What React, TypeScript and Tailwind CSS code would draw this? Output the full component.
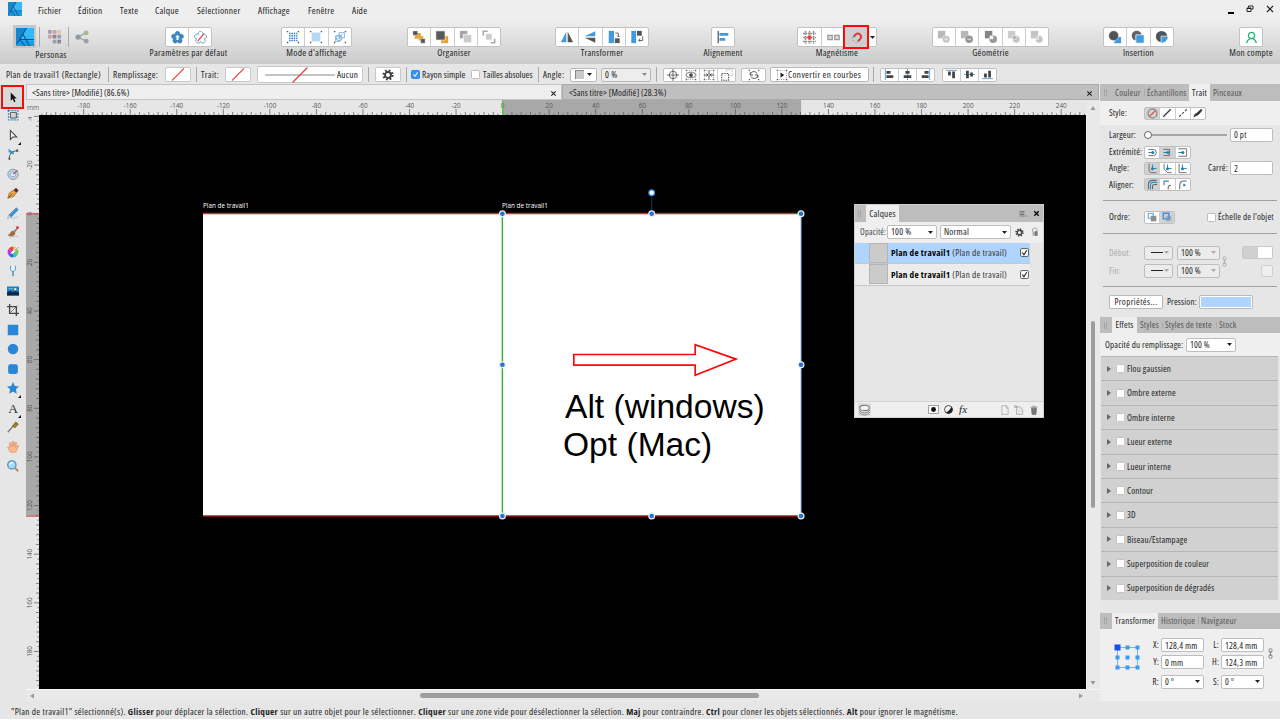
import type { ReactNode } from "react";

// 16x16 drawing box shared by all small icons
function Ic({ s = 14, children, className = "" }: { s?: number; children: ReactNode; className?: string }) {
  return (
    <svg width={s} height={s} viewBox="0 0 16 16" fill="none" className={`shrink-0 ${className}`}>
      {children}
    </svg>
  );
}

function Logo({ s }: { s: number }) {
  return (
    <Ic s={s}>
      <rect width="16" height="16" fill="#1d9be0" />
      <path d="M9.5 0H16v11H3.5z" fill="#36b8f5" />
      <path d="M0 0h9L0 14z" fill="#1787cc" />
      <path d="M9.3 0L.6 14.5M3.4 10.2H16M3.4 10.2L8 16M6.2 5.5L12 16" stroke="#0c4f86" strokeWidth=".9" />
    </Ic>
  );
}

const Sep = ({ className = "" }: { className?: string }) => <div className={`w-px shrink-0 bg-[#a9a9a9] ${className}`} />;

const Caret = ({ className = "text-[#222]" }: { className?: string }) => (
  <svg width="5" height="3" viewBox="0 0 5 3" className={`shrink-0 ${className}`}>
    <path d="M0 0h5L2.5 3z" fill="currentColor" />
  </svg>
);

function Check({ on = false, className = "" }: { on?: boolean; className?: string }) {
  return (
    <div
      className={`flex size-[9px] shrink-0 items-center justify-center rounded-[1.5px] border ${
        on ? "border-[#2f86ea] bg-[#3a92f2]" : "border-[#bdbdbd] bg-white"
      } ${className}`}
    >
      {on && (
        <Ic s={7}>
          <path d="M3 8l4 4 6-9" stroke="#fff" strokeWidth="2.4" />
        </Ic>
      )}
    </div>
  );
}

// Titled group of buttons in the main toolbar
function Group({ label, className, icons, active = -1, extra }: { label: string; className: string; icons: ReactNode[]; active?: number; extra?: ReactNode }) {
  return (
    <div className={`flex shrink-0 flex-col items-center ${className}`}>
      <div className="flex h-5 w-full rounded-[2px] border border-[#c2c2c2] bg-white">
        {icons.map((icon, i) => (
          <div
            key={i}
            className={`flex flex-1 items-center justify-center ${i > 0 ? "border-l border-[#cdcdcd]" : ""} ${
              i === active ? "-my-[2px] bg-[#cfcfcf] outline-2 -outline-offset-1 outline-[#fa0a0a]" : ""
            }`}
          >
            {icon}
          </div>
        ))}
        {extra}
      </div>
      <div className="-mt-px text-[9.400px] leading-[14px] tracking-[0.26px]">{label}</div>
    </div>
  );
}

function ButtonRow({ icons, className, on = [] }: { icons: ReactNode[]; className: string; on?: number[] }) {
  return (
    <div className={`flex shrink-0 rounded-[2px] border border-[#c0c0c0] bg-white ${className}`}>
      {icons.map((icon, i) => (
        <div
          key={i}
          className={`flex flex-1 items-center justify-center ${i > 0 ? "border-l border-[#cdcdcd]" : ""} ${on.includes(i) ? "bg-[#d2d2d2]" : ""}`}
        >
          {icon}
        </div>
      ))}
    </div>
  );
}

const corners = <path d="M1 1h1.6v1.6H1zM13.4 1H15v1.6h-1.6zM1 13.4h1.6V15H1zM13.4 13.4H15V15h-1.6z" fill="#555" />;
const frame = <rect x="2" y="2" width="12" height="12" stroke="#777" strokeWidth=".8" strokeDasharray="1.5 1.5" />;

// five petals, drawn as arcs between the inner corners of the flower
const flower = "M5.3 4.4a2.9 2.9 0 1 1 5.4 0a2.9 2.9 0 1 1 1.7 5.2a2.9 2.9 0 1 1-4.4 3.2a2.9 2.9 0 1 1-4.4-3.2a2.9 2.9 0 1 1 1.7-5.2z";

const defaultIcons = [
  <Ic key="a" s={13}><path d={flower} fill="#3e87c0" stroke="#2b6ea8" strokeWidth=".6" /><path d="M8 4.500l2.800 3.300H9.200v3.400H6.800V7.800H5.200z" fill="#fff" /></Ic>,
  <Ic key="b" s={13}><path d={flower} stroke="#6ba3cf" strokeWidth="1.200" /><path d="M4.500 12.500l7.500-9" stroke="#ee3b33" strokeWidth="1.500" /></Ic>,
];

const viewIcons = [
  <Ic key="a">{corners}<path d="M3.500 4h9.500M3.500 6.700h9.500M3.500 9.400h9.500M3.500 12.100h9.500" stroke="#2f80c8" strokeWidth="1.700" strokeDasharray="1.700 1" /></Ic>,
  <Ic key="b">{corners}<rect x="3" y="3" width="10" height="10" fill="#b5d8f3" /></Ic>,
  <Ic key="c">{corners}<path d="M7 3h6v6H7zM3 6.500h5V13H3zM4 11.500l7-7" stroke="#78aed8" /><circle cx="7" cy="9" r="3.300" stroke="#78aed8" /></Ic>,
];

const orderIcons = [
  <Ic key="a"><path d="M5 3.500h5v5H5zM7.500 7H13v5H7.500zM3 6h4v4H3z" fill="#e7a334" /><path d="M1 1h5.500v5H1zM10 10h5v5h-5z" fill="#555" stroke="#fff" strokeWidth=".4" /></Ic>,
  <Ic key="b"><path d="M7 7h8v8H7z" fill="#e7a334" /><path d="M1 1h10.500v10.500H1z" fill="#5a5a5a" stroke="#fff" strokeWidth=".7" /></Ic>,
  <Ic key="c"><path d="M1 1h8.500v8.500H1z" fill="#a6a6a6" /><path d="M5 5h9.500v9.500H5z" fill="#ccc" stroke="#fff" strokeWidth=".8" /></Ic>,
  <Ic key="d"><path d="M1.500 6.500v-5h5M14.500 10v4.500H10" stroke="#a8a8a8" strokeWidth="1.800" /><path d="M4 4h7.500v7.500H4z" fill="#ccc" stroke="#fff" strokeWidth=".8" /></Ic>,
];

const transformIcons = [
  <Ic key="a"><path d="M7.200 2v12H1z" fill="#3f9ae0" /><path d="M8.800 2v12H15z" fill="#555" /></Ic>,
  <Ic key="b"><path d="M14 1.500v5.700H2z" fill="#3f9ae0" /><path d="M14 14.500V8.800H2z" fill="#555" /></Ic>,
  <Ic key="c"><path d="M2 1h6v14H2z" fill="#3f9ae0" /><path d="M9 9.500h5.500V15H9z" fill="#555" /><path d="M9.500 3.500h3.500v4.500M11.500 6.500L13 8l1.500-1.500" stroke="#666" strokeWidth="1.100" /></Ic>,
  <Ic key="d"><path d="M1.500 1h5.500v14H1.500z" fill="#3f9ae0" /><path d="M8 1h5.500v5.500H8z" fill="#555" /><path d="M14.500 7v5H10M11.500 10L10 12l1.500 1.500" stroke="#666" strokeWidth="1.100" /></Ic>,
];

const alignIcon = [
  <Ic key="a"><path d="M2.500 1v14" stroke="#445" strokeWidth="1.300" /><path d="M4 3.500h10v3.200H4zM4 9h6.500v3.200H4z" fill="#3f9ae0" /></Ic>,
];

const snapIcons = [
  <Ic key="a" s={13}><path d="M3 0v16M8 0v16M13 0v16M0 3h16M0 8h16M0 13h16" stroke="#8a8a8a" strokeWidth="1.800" strokeDasharray="2 1" /><circle cx="8" cy="8" r="2.700" fill="#f04038" /></Ic>,
  <Ic key="b" s={13}><path d="M1 5.500h5.500v5H1zM9.500 5.500H15v5H9.500z" fill="#d8d8d8" stroke="#999" strokeWidth="1.500" /></Ic>,
  <Ic key="c" s={13}><path d="M5 6.500L7 4.200a3.900 3.900 0 015.600 5.400L10.500 12" stroke="#e8353b" strokeWidth="2.500" /><path d="M5.500 5.800L4 7.500M11 11.500L9.500 13" stroke="#777" strokeWidth="2.500" /><path d="M1.500 8.500l1.500.7M3.500 11.500l1.500.8M7 13.500l1 1.500" stroke="#888" /></Ic>,
];

const geo = (key: string, extra: ReactNode, dark = "#b9b9b9") => (
  <Ic key={key}><path d="M1 1h8.500v8.500H1z" fill={dark} /><circle cx="10.500" cy="10.500" r="4.300" fill="#c3c3c3" stroke="#fff" strokeWidth=".5" />{extra}</Ic>
);
const geometryIcons = [
  geo("add", <path d="M8.500 10.500h4M10.500 8.500v4" stroke="#eee" />),
  geo("sub", <><circle cx="10.500" cy="10.500" r="4.300" fill="#979797" /><path d="M8.300 10.500h4.400" stroke="#eee" /></>),
  geo("int", <><circle cx="10.500" cy="10.500" r="4.300" fill="#999" /><path d="M6.500 6.500h4v4h-4z" fill="#f5f5f5" /></>, "#858585"),
  geo("xor", <path d="M6.500 6.500h4v4h-4z" fill="#aaa" stroke="#fff" strokeWidth=".6" />, "#ccc"),
  geo("div", <path d="M9.500 6.500v4h-4" stroke="#fff" />, "#c4c4c4"),
];

const insertIcons = [
  <Ic key="a"><path d="M8.500 8H15v7H7z" fill="#3f9ae0" /><circle cx="6.500" cy="6.500" r="5.700" fill="#505459" stroke="#fff" strokeWidth=".6" /></Ic>,
  <Ic key="b"><circle cx="6.500" cy="6.500" r="5.700" fill="#606468" /><path d="M5.500 5.500H15V15H5.500z" fill="#3f9ae0" stroke="#fff" strokeWidth=".8" /></Ic>,
  <Ic key="c"><circle cx="7.500" cy="7.500" r="6.500" fill="#505459" /><path d="M7 7h8c0 4-3 8-8 8z" fill="#3f9ae0" stroke="#fff" strokeWidth=".8" /></Ic>,
];

function MenuBar() {
  // each item: label and its slot width
  const items: [string, string][] = [
    ["Fichier", "w-[40px]"],
    ["Édition", "w-[42px]"],
    ["Texte", "w-[35px]"],
    ["Calque", "w-[42px]"],
    ["Sélectionner", "w-[61px]"],
    ["Affichage", "w-[50px]"],
    ["Fenêtre", "w-[44px]"],
    ["Aide", "w-[40px]"],
  ];
  return (
    <div className="flex h-[22px] shrink-0 items-center bg-[#eeeeee] text-[9.400px] tracking-[0.26px]">
      <div className="ml-2 w-[30px] -translate-y-[2px]"><Logo s={14} /></div>
      {items.map(([t, w]) => (
        <div key={t} className={`${w} pt-px`}>{t}</div>
      ))}
      <div className="mr-[6px] ml-auto flex items-center gap-[12px] pb-1">
        <div className="mt-2 h-[2px] w-[6px] bg-black" />
        <Ic s={8}><path d="M5 5V2h9v6h-3M2 6h8v7H2zM2 7h8" stroke="#222" strokeWidth="2" /></Ic>
        <Ic s={8}><path d="M2 2l12 12M14 2L2 14" stroke="#222" strokeWidth="2.400" /></Ic>
      </div>
    </div>
  );
}

function Toolbar() {
  return (
    <div className="flex h-[42px] shrink-0 items-start bg-linear-to-b from-[#ededed] to-[#cbcbcb] pt-[5px]">
      <div className="-mt-[2px] ml-[13px] flex w-[76px] flex-col items-center">
        <div className="flex w-full items-center">
          <div className="flex size-[23px] items-center justify-center bg-[#c6c6c6]"><Logo s={18} /></div>
          <Sep className="ml-[3px] h-[20px]" />
          <Ic s={15} className="ml-[7px]">
            <path d="M1 1h4v4H1zM6 11.500h4v4H6zM11 6h4v4h-4z" fill="#a99bb0" /><path d="M6 1h4v4H6zM1 6h4v4H1z" fill="#c9a3a0" /><path d="M6 6h4v4H6zM11 11.500h4v4h-4z" fill="#8c8797" /><path d="M11 1h4v4h-4z" fill="#dac6bd" />
          </Ic>
          <Sep className="ml-[6px] h-[20px]" />
          <Ic s={14} className="ml-[6px]">
            <path d="M13 3L3.500 8 13 13" stroke="#9aa5aa" strokeWidth="1.500" /><circle cx="3.500" cy="8" r="3" fill="#8e9ba3" /><circle cx="12.800" cy="3.200" r="2.700" fill="#a4b892" /><circle cx="12.800" cy="12.800" r="2.700" fill="#9a9fa8" />
          </Ic>
        </div>
        <div className="text-[9.400px] leading-[14px] tracking-[0.26px]">Personas</div>
      </div>
      <Group label="Paramètres par défaut" className="ml-[76px] w-[47px]" icons={defaultIcons} />
      <Group label="Mode d'affichage" className="ml-[69px] w-[71px]" icons={viewIcons} />
      <Group label="Organiser" className="ml-[55px] w-[94px]" icons={orderIcons} />
      <Group label="Transformer" className="ml-[54px] w-[94px]" icons={transformIcons} />
      <Group label="Alignement" className="ml-[62px] w-[24px]" icons={alignIcon} />
      <Group
        label="Magnétisme"
        className="ml-[62px] w-[80px]"
        icons={snapIcons}
        active={2}
        extra={<div className="flex w-[8px] items-center justify-center"><Caret /></div>}
      />
      <Group label="Géométrie" className="ml-[55px] w-[117px]" icons={geometryIcons} />
      <Group label="Insertion" className="ml-[54px] w-[71px]" icons={insertIcons} />
      <Group
        label="Mon compte"
        className="ml-[65px] w-[24px]"
        icons={[<Ic key="a" s={13}><circle cx="8" cy="5.500" r="3.800" stroke="#22b573" strokeWidth="1.500" /><path d="M2 15c.5-3.500 3-5 4.500-5.700M14 15c-.5-3.500-3-5-4.500-5.700" stroke="#22b573" strokeWidth="1.500" /></Ic>]}
      />
    </div>
  );
}

const NoFill = () => (
  <div className="flex h-[15px] w-[26px] shrink-0 items-center justify-center rounded-[2px] border border-[#c8c8c8] bg-white">
    <svg width="14" height="13" viewBox="0 0 14 13"><path d="M1 12.500L13 .5" stroke="#ee4a44" strokeWidth="1.100" /></svg>
  </div>
);

const ctxIcons = [
  <Ic key="a" s={12}><circle cx="8" cy="8" r="5" stroke="#444" /><path d="M8 0v16M0 8h16" stroke="#444" /></Ic>,
  <Ic key="b" s={12}>{corners}{frame}<path d="M1 8c3-5 11-5 14 0-3 5-11 5-14 0z" fill="#fff" stroke="#444" /><circle cx="8" cy="8" r="2.500" fill="#444" /></Ic>,
  <Ic key="c" s={12}>{corners}{frame}<path d="M8 2v12M1 8h5M10 8h5M4.500 6l2 2-2 2M11.500 6l-2 2 2 2" stroke="#444" strokeWidth="1.200" /></Ic>,
  <Ic key="d" s={12}><path d="M1 6h9v9H1z" stroke="#555" strokeWidth="1.500" strokeDasharray="2 1.300" /><path d="M7 4V1h8v8h-3" stroke="#aaa" strokeDasharray="2 1" /></Ic>,
];

const horAlign = [
  <Ic key="a" s={11}><path d="M2 0v16" stroke="#6aa9dc" strokeWidth="1.500" /><path d="M3.500 3h6v4h-6zM3.500 9h10v4h-10z" fill="#444" /></Ic>,
  <Ic key="b" s={11}><path d="M8 0v16" stroke="#6aa9dc" strokeWidth="1.500" /><path d="M5 3h6v4H5zM2.500 9h11v4h-11z" fill="#444" /></Ic>,
  <Ic key="c" s={11}><path d="M14 0v16" stroke="#6aa9dc" strokeWidth="1.500" /><path d="M6.500 3h6v4h-6zM2.500 9h10v4h-10z" fill="#444" /></Ic>,
];
const verAlign = [
  <Ic key="a" s={11}><path d="M0 2h16" stroke="#6aa9dc" strokeWidth="1.500" /><path d="M3 3.500h4v6H3zM9 3.500h4v10H9z" fill="#444" /></Ic>,
  <Ic key="b" s={11}><path d="M0 8h16" stroke="#6aa9dc" strokeWidth="1.500" /><path d="M3 2.500h4v11H3zM9 5h4v6H9z" fill="#444" /></Ic>,
  <Ic key="c" s={11}><path d="M0 14h16" stroke="#6aa9dc" strokeWidth="1.500" /><path d="M3 6.500h4v6H3zM9 2.500h4v10H9z" fill="#444" /></Ic>,
];

function ContextBar() {
  return (
    <div className="flex h-5 shrink-0 items-center bg-[#e6e6e6] pt-px text-[9.200px] tracking-[0.3px]">
      <div className="ml-[6px] w-[102px] shrink-0">Plan de travail1 (Rectangle)</div>
      <Sep className="h-[15px]" />
      <div className="ml-[4px] w-[52px] shrink-0">Remplissage:</div>
      <NoFill />
      <Sep className="ml-[5px] h-[15px]" />
      <div className="ml-[4px] w-[24px] shrink-0">Trait:</div>
      <NoFill />
      <div className="ml-[6px] flex h-[17px] w-[106px] shrink-0 items-center rounded-[2px] border border-[#c8c8c8] bg-white pl-[7px]">
        <svg width="70" height="16" viewBox="0 0 70 16"><path d="M0 8h70" stroke="#555" strokeWidth=".7" /><path d="M27.500 15.500L42.500.5" stroke="#ee3a34" strokeWidth="1.300" /></svg>
        <span className="ml-[2px]">Aucun</span>
      </div>
      <Sep className="ml-[5px] h-[15px]" />
      <div className="ml-[6px] flex h-[15px] w-[26px] shrink-0 items-center justify-center rounded-[2px] border border-[#c8c8c8] bg-white"><Gear s={12} /></div>
      <Sep className="ml-[5px] h-[15px]" />
      <Check on className="ml-[4px]" />
      <div className="ml-[2px] w-[49px] shrink-0 tracking-[0.1px]">Rayon simple</div>
      <Check />
      <div className="ml-[3px] w-[55px] shrink-0 tracking-normal">Tailles absolues</div>
      <Sep className="h-[15px]" />
      <div className="ml-[4px] w-[27px] shrink-0">Angle:</div>
      <div className="flex h-[14px] w-[27px] shrink-0 items-center justify-between rounded-[2px] border border-[#b8b8b8] bg-white px-1">
        <div className="size-[9px] border-t border-l border-[#888] bg-[#c8c8c8]" />
        <Caret />
      </div>
      <div className="ml-[4px] flex h-[14px] w-[50px] shrink-0 items-center justify-between rounded-[2px] border border-[#b8b8b8] bg-[#ededed] px-[3px]">
        0 %<Caret className="text-[#888]" />
      </div>
      <Sep className="ml-[5px] h-[15px]" />
      <ButtonRow className="ml-[6px] h-[14px] w-[73px]" icons={ctxIcons} />
      <ButtonRow className="ml-[5px] h-[14px] w-[25px]" icons={[<Ic key="a" s={12}>{corners}<path d="M3 7c1-4 7-5 9-1M13 9c-1 4-7 5-9 1M3 4.500V8h3.500M13 11.500V8H9.500" stroke="#444" strokeWidth="1.300" /></Ic>]} />
      <div className="ml-[4px] flex h-[15px] w-[99px] shrink-0 items-center rounded-[2px] border border-[#b8b8b8] bg-white pl-[5px]">
        <Ic s={12}>{corners}{frame}<path d="M6 4.500l5 3.500-5 3.500z" fill="#222" /></Ic>
        <span className="tracking-[0.38px]">Convertir en courbes</span>
      </div>
      <Sep className="ml-[4px] h-[15px]" />
      <ButtonRow className="ml-[6px] h-[14px] w-[55px]" icons={horAlign} />
      <ButtonRow className="ml-[7px] h-[14px] w-[55px]" icons={verAlign} />
    </div>
  );
}

function Gear({ s }: { s: number }) {
  return (
    <Ic s={s}>
      <circle cx="8" cy="8" r="6" stroke="#444" strokeWidth="3" strokeDasharray="2.400 2.312" />
      <circle cx="8" cy="8" r="4" stroke="#444" strokeWidth="2.600" />
    </Ic>
  );
}

const tools: ReactNode[] = [
  <path d="M5 2v11l2.600-2.300L9.500 15l1.800-.9L9.500 10H13z" fill="#111" />,
  <><path d="M2 2h12.500v12.500H2z" stroke="#2c8fcc" strokeWidth="1.600" strokeDasharray="2.500 1.500" /><path d="M4.500 4.500h8v7.500h-8z" fill="#d5d5d5" stroke="#555" strokeWidth="1.300" /><path d="M0 2h4M2 0v4" stroke="#2c8fcc" /></>,
  <path d="M4.500 2v12l3.200-3.300H13z" fill="#f7f7f7" stroke="#444" strokeWidth="1.400" />,
  <><path d="M3 14C3 8 7 4 14 3.500" stroke="#444" strokeWidth="1.200" /><path d="M2 2l7 6M2 5l4 .5" stroke="#2c8fcc" strokeWidth="1.500" /><path d="M12 2h3v3h-3zM2 13h2.500v2.500H2z" fill="#555" /><circle cx="6.500" cy="6" r="2" fill="#2c8fcc" /></>,
  <><circle cx="8" cy="8.500" r="6.800" fill="#c9d6e2" stroke="#8595a5" strokeWidth="1.300" /><circle cx="8" cy="8.500" r="3.500" fill="#e8f2fa" stroke="#6ba6d0" strokeWidth="1.200" /><path d="M8 8.500l6-5.500" stroke="#b84a70" strokeWidth="1.600" /></>,
  <><path d="M1 15l2-7L9 4l3.500 3.500L9 12.500z" fill="#eaa43c" stroke="#7a5222" strokeWidth=".8" /><path d="M9 4l3-3 3.500 3.500-3 3z" fill="#5a2e22" /><path d="M2 14l5-5" stroke="#553818" /></>,
  <><path d="M1 15l1.500-4.500L12.500 1 15 3.500l-9.500 10z" fill="#3e95d8" stroke="#2868a0" strokeWidth=".6" /><path d="M1 15l1.500-4.500 3 3z" fill="#f0d4a8" /><path d="M6 15c3 0 6-1 9-2" stroke="#9dbfdc" /></>,
  <><path d="M1.500 12c3 0 3.500-5.500 6.500-5.500l2.800 2.700C10 13 6 14.500 1.500 12z" fill="#b5652c" stroke="#70401c" strokeWidth=".6" /><path d="M8 7L13 2.500l1.500 1L10.500 9z" fill="#888" /><circle cx="14" cy="2" r="2" fill="#e04040" /><path d="M2 14.500c4 1.500 8-2 13-.5" stroke="#9dbfdc" /></>,
  <><path d="M8 8V.8A7.200 7.200 0 0114.200 4.400z" fill="#ffb02c" /><path d="M8 8l6.200-3.600a7.200 7.200 0 010 7.200z" fill="#68d040" /><path d="M8 8l6.200 3.600A7.200 7.200 0 018 15.200z" fill="#2cc4c8" /><path d="M8 8v7.200a7.200 7.200 0 01-6.200-3.600z" fill="#4060e8" /><path d="M8 8l-6.200 3.600a7.200 7.200 0 010-7.200z" fill="#b838e0" /><path d="M8 8L1.800 4.400A7.200 7.200 0 018 .8z" fill="#f03868" /><path d="M6 10l9-9" stroke="#fff" strokeWidth="2.400" /><path d="M10 6.500l5-5" stroke="#666" strokeWidth="1.200" /></>,
  <><path d="M5 1c-.8 4-.5 7 3 8 3.500-1 3.800-4 3-8" fill="#eaf4fc" stroke="#4a93c8" strokeWidth="1.300" /><path d="M8 9v6" stroke="#4a93c8" strokeWidth="2" /></>,
  <><path d="M0 2h16v12H0z" fill="#1d7fc8" /><path d="M0 10l4-2.500 4 2 3-1.500 5 2v4H0z" fill="#0c2a48" /><circle cx="11" cy="5.500" r="1.600" fill="#ffe9a0" /><path d="M2 5h6" stroke="#9fd2f0" /></>,
  <><path d="M3.500 0v12.500H16M0 3.500h12.500V16" stroke="#444" strokeWidth="1.800" /><path d="M5 11l9-9" stroke="#555" /></>,
  <path d="M1 1h14v14H1z" fill="#2a87d6" />,
  <circle cx="8" cy="8" r="7" fill="#2a87d6" />,
  <rect x="1.500" y="1.500" width="13" height="13" rx="3" fill="#2a87d6" />,
  <path d="M8 0l2.400 5.200 5.600.7-4.100 3.900L13 15.500 8 12.700l-5 2.800 1.100-5.700L0 5.900l5.600-.7z" fill="#2a87d6" />,
  <text x="8" y="14" textAnchor="middle" fontSize="18" fill="#333" fontFamily="Liberation Serif, serif">A</text>,
  <><path d="M1 15l7-8" stroke="#777" strokeWidth="1.600" /><path d="M7.500 6.500L11.500 1.500 15 4l-4.500 5z" fill="#a87c28" stroke="#6c4c18" /></>,
  <path d="M4.500 15L.7 8.500l1.500-1.200L4.500 9 3 2.700l1.800-.4L6.700 7 7 .6h1.800L9 7l2-5.500 1.700.5L11.500 8.500 14 5.500l1.500.9-2.500 5.500L11.500 15z" fill="#fbb98c" stroke="#cf7c4c" strokeWidth=".7" />,
  <><circle cx="6.500" cy="6.500" r="5.500" fill="#a7d8f8" stroke="#3d88c0" strokeWidth="1.500" /><path d="M3.500 6l4-3" stroke="#fff" strokeWidth="1.700" /><path d="M10.500 10.500l4.500 4.500" stroke="#c08a48" strokeWidth="2.500" /></>,
];
const withFlyout = [2, 15, 16];

function ToolColumn() {
  return (
    <div className="flex w-[26px] shrink-0 flex-col bg-[#e6e6e6] pt-[2px]">
      {tools.map((t, i) => (
        <div
          key={i}
          className={`relative flex shrink-0 items-center justify-center ${
            i === 0 ? "-mb-[2px] ml-[2px] h-[21.500px] w-[21px] bg-[#d9d9d9] outline-2 -outline-offset-1 outline-[#fa0a0a]" : "h-[19.500px] w-[25px]"
          }`}
        >
          <Ic s={12}>{t}</Ic>
          {withFlyout.includes(i) && (
            <svg width="3" height="3" viewBox="0 0 3 3" className="absolute right-[4px] bottom-0"><path d="M3 0v3H0z" fill="#111" /></svg>
          )}
        </div>
      ))}
    </div>
  );
}

// Rulers: a label every 20 mm, a mark every 4 mm and a small one every 2 mm
const H_ZERO = 476.6;
const H_MM = 2.3275;
const V_ZERO = 98.7;
const V_MM = 2.432;

function HorizontalRuler() {
  const marks = Array.from({ length: 226 }, (_, i) => -200 + i * 2).filter((v) => v >= -198 && v < 251);
  return (
    <svg width="1060" height="15" viewBox="0 0 1060 15" className="block [font-stretch:100%]">
      <rect width="1060" height="15" fill="#e6e6e6" />
      <rect x={H_ZERO} width="298.500" height="15" fill="#a8a8a8" />
      <text x="1" y="9.500" fontSize="6.600" fill="#666">mm</text>
      {marks.map((v) => {
        const x = H_ZERO + v * H_MM;
        const y = v % 20 === 0 ? 9 : v % 4 === 0 ? 12 : 13.5;
        return <path key={v} d={`M${x} ${y}V15`} stroke="#555" strokeWidth=".7" />;
      })}
      {marks.filter((v) => v % 20 === 0 && v > -190).map((v) => (
        <text key={v} x={H_ZERO + v * H_MM} y="7.600" fontSize="6.300" textAnchor="middle" fill="#555">{v}</text>
      ))}
      <path d={`M${H_ZERO} 0V15`} stroke="#3bd23b" />
    </svg>
  );
}

function VerticalRuler() {
  const marks = Array.from({ length: 119 }, (_, i) => -40 + i * 2).filter((v) => v < 196);
  return (
    <svg width="13" height="574" viewBox="0 0 13 574" className="block shrink-0 [font-stretch:100%]">
      <rect width="13" height="574" fill="#e6e6e6" />
      <rect y={V_ZERO} width="13" height="302.500" fill="#a8a8a8" />
      {marks.map((v) => {
        const y = V_ZERO + v * V_MM;
        const x = v % 20 === 0 ? 8 : v % 4 === 0 ? 10 : 11.5;
        return <path key={v} d={`M${x} ${y}H13`} stroke="#555" strokeWidth=".7" />;
      })}
      <text transform="translate(6 4) rotate(-90)" fontSize="5.500" textAnchor="middle" fill="#555">-4</text>
      {marks.filter((v) => v % 20 === 0 && v > -40).map((v) => (
        <text key={v} transform={`translate(6 ${V_ZERO + v * V_MM}) rotate(-90)`} fontSize="6.300" textAnchor="middle" fill="#555">{v}</text>
      ))}
      <path d={`M0 ${V_ZERO}h13M0 ${V_ZERO + 302.5}h13`} stroke="#e84848" />
    </svg>
  );
}

function Combo({ text, className = "", dim = false }: { text: ReactNode; className?: string; dim?: boolean }) {
  return (
    <div
      className={`flex h-[14px] shrink-0 items-center justify-between rounded-[2px] border border-[#bdbdbd] px-[3px] ${dim ? "bg-[#ececec]" : "bg-white"} ${className}`}
    >
      {text}
      <Caret className={dim ? "text-[#aaa]" : "text-[#222]"} />
    </div>
  );
}

function LayersPanel() {
  return (
    <div className="absolute top-[89px] left-[815px] flex h-[214px] w-[190px] flex-col border border-[#cfcfcf] bg-[#e6e6e6] text-[9.200px] tracking-[0.2px]">
      <div className="flex h-[17px] shrink-0 items-center bg-[#bdbdbd]">
        <Grip className="ml-[3px]" />
        <div className="ml-[5px] flex h-full w-[33px] items-center justify-center bg-[#efefef] pt-px">Calques</div>
        <Ic s={8} className="ml-auto"><path d="M1 3h10M1 6h10M1 9h10M1 12h10M13 12h3" stroke="#666" strokeWidth="1.500" /></Ic>
        <Ic s={7} className="mr-[3px] ml-[6px]"><path d="M3 3l10 10M13 3L3 13" stroke="#000" strokeWidth="3" /></Ic>
      </div>
      <div className="flex h-[20.500px] shrink-0 items-center bg-[#efefef] pl-[5px]">
        <div className="w-[27px] pt-px text-[8.600px] text-[#444]">Opacité:</div>
        <Combo text="100 %" className="w-[50px]" />
        <Combo text="Normal" className="ml-[3px] w-[71px]" />
        <div className="ml-[4px]"><Gear s={9} /></div>
        <Ic s={10} className="ml-[6px]"><path d="M4 7V4c0-3 7-3 7 0v3" stroke="#999" strokeWidth="1.500" /><path d="M4 7h8v7H4z" fill="#aaa" /><path d="M8 7h4v7H8z" fill="#777" /></Ic>
      </div>
      {[true, false].map((sel) => (
        <div key={String(sel)} className={`flex h-[21.500px] w-[175px] shrink-0 items-center border-b border-[#c8c8c8] ${sel ? "bg-[#afd4fd]" : "bg-[#ececec]"}`}>
          <div className="ml-[14px] h-[20px] w-[19px] border border-[#b5b5b5] bg-[#cbcbcb]" />
          <div className="ml-[3px] w-[129px] pt-px text-[9.200px] tracking-[0.26px] text-[#333]">
            <b className="text-black">Plan de travail1</b> (Plan de travail)
          </div>
          <Ic s={9}><rect x="1" y="1" width="14" height="14" rx="2" fill="#fff" stroke="#444" strokeWidth="1.500" /><path d="M4 8l3 4 5-8" stroke="#222" strokeWidth="2" /></Ic>
        </div>
      ))}
      <div className="mt-auto flex h-[16px] shrink-0 items-center border-t border-[#d2d2d2] bg-[#efefef]">
        <Ic s={13} className="ml-[3px] bg-[#dcdcdc]"><ellipse cx="8" cy="6" rx="6" ry="3.200" fill="#f2f2f2" stroke="#777" strokeWidth="1.300" /><path d="M2 8.500c0 2.500 3.500 3.700 6 3.700s6-1.200 6-3.700M2 11c0 2.500 3.500 3.700 6 3.700s6-1.200 6-3.700" stroke="#888" strokeWidth="1.200" /></Ic>
        <Ic s={11} className="ml-[57px]"><rect x="1" y="2" width="14" height="12" fill="#fff" stroke="#777" /><circle cx="8" cy="8" r="3.600" fill="#111" /></Ic>
        <Ic s={9} className="ml-[5px]"><circle cx="8" cy="8" r="7" fill="#f4f4f4" stroke="#333" strokeWidth="1.500" /><path d="M13 3a7 7 0 11-10 10c4-1 8-5 10-10z" fill="#222" /></Ic>
        <i className="ml-[6px] font-['Liberation_Serif',serif] text-[11px] leading-none">fx</i>
        <Ic s={10} className="ml-auto"><path d="M3 1h7l3 3.500V15H3zM10 1v4h3" stroke="#999" /></Ic>
        <Ic s={10} className="ml-[4px]"><path d="M4 3h6l4 4v8H4zM1 1h3v3H1z" fill="#e4e4e4" stroke="#888" strokeWidth="1.200" strokeDasharray="2 1" /></Ic>
        <Ic s={10} className="mr-[4px] ml-[5px]"><path d="M2.500 3.500h11M6 2h4M4 5l.8 10h6.400L12 5z" fill="#777" stroke="#666" /></Ic>
      </div>
    </div>
  );
}

const Grip = ({ className = "" }: { className?: string }) => (
  <div className={`h-[7px] w-[3px] shrink-0 border-x border-[#a5a5a5] ${className}`} />
);

function Handle({ x, y, hollow = false }: { x: number; y: number; hollow?: boolean }) {
  return <circle cx={x} cy={y} r="2.900" fill={hollow ? "#fff" : "#2b73c9"} stroke={hollow ? "#2b83e0" : "#e8eef5"} strokeWidth="1.200" />;
}

function Canvas() {
  return (
    <div className="relative h-[574px] w-[1047px] shrink-0 overflow-hidden bg-black">
      <div className="absolute top-[85px] left-[164px] text-[6.400px] leading-[12px] text-white [font-stretch:100%]">Plan de travail1</div>
      <div className="absolute top-[85px] left-[463px] text-[6.400px] leading-[12px] text-white [font-stretch:100%]">Plan de travail1</div>
      <div className="absolute top-[98px] left-[164px] h-[303px] w-[598px] bg-white" />
      <svg width="1047" height="574" viewBox="0 0 1047 574" className="absolute inset-0">
        <path d="M164 98.500h598" stroke="#c4303a" strokeWidth="1.400" />
        <path d="M164 401h598" stroke="#a01a1e" strokeWidth="1.600" />
        <path d="M463.400 99v302" stroke="#2faf38" strokeWidth="1.400" />
        <path d="M762 99v302" stroke="#8fbdf0" />
        <path d="M612.700 78v20" stroke="#16365c" />
        <Handle x={612.7} y={77.7} hollow />
        <Handle x={463.4} y={98.7} />
        <Handle x={612.7} y={98.7} />
        <Handle x={762} y={98.7} />
        <Handle x={463.4} y={249.8} />
        <Handle x={762} y={249.8} />
        <Handle x={463.4} y={401} />
        <Handle x={612.7} y={401} />
        <Handle x={762} y={401} />
        <path d="M534.800 239.500H656.200V229.700L697 244.100L656.200 260.200V250.200H534.800z" stroke="#fa0a0a" strokeWidth="1.700" fill="#fff" />
      </svg>
      <div className="absolute top-[273px] left-[526px] font-['Liberation_Sans',Arial,sans-serif] text-[33.600px] leading-[38.300px] text-black">
        <div>Alt (windows)</div>
        <div className="-ml-[2px]">Opt (Mac)</div>
      </div>
      <LayersPanel />
    </div>
  );
}

const Arrow = ({ d }: { d: string }) => (
  <svg width="6" height="6" viewBox="0 0 6 6"><path d={d} fill="#999" /></svg>
);

function Workspace() {
  return (
    <div className="flex w-[1074px] shrink-0 flex-col bg-[#e9e9e9]">
      <div className="flex h-4 shrink-0 text-[9px] tracking-[0.1px]">
        <div className="flex w-[536px] items-center justify-between border border-[#c4c4c4] bg-[#efefef] pt-[2px] pr-[4px] pl-[5px]">
          <span>&lt;Sans titre&gt; [Modifié] (86.6%)</span>
          <Ic s={7}><path d="M3 3l10 10M13 3L3 13" stroke="#222" strokeWidth="2.500" /></Ic>
        </div>
        <div className="flex w-[537px] items-center justify-between border border-[#aaa] bg-[#bfbfbf] pt-[2px] pr-[5px] pl-[6px]">
          <span>&lt;Sans titre&gt; [Modifié] (28.3%)</span>
          <Ic s={7}><path d="M3 3l10 10M13 3L3 13" stroke="#222" strokeWidth="2.500" /></Ic>
        </div>
      </div>
      <div className="flex h-[15px] shrink-0">
        <HorizontalRuler />
        <div className="flex w-[14px] items-center justify-center"><Arrow d="M3 1l2.500 4h-5z" /></div>
      </div>
      <div className="flex h-[574px] shrink-0">
        <VerticalRuler />
        <Canvas />
        <div className="flex w-[14px] flex-col items-center bg-[#e9e9e9] pb-[3px]">
          <div className="mt-[206px] h-[187px] w-[4px] rounded-full bg-[#9d9d9d]" />
          <div className="mt-auto"><Arrow d="M3 5l2.500-4h-5z" /></div>
        </div>
      </div>
      <div className="flex h-[12px] shrink-0 items-center border-t border-[#f6f6f6] pl-[3px]">
        <Arrow d="M1 3l4-2.500v5z" />
        <div className="ml-[385px] h-[5px] w-[339px] rounded-full bg-[#9d9d9d]" />
        <div className="ml-[319px]"><Arrow d="M5 3L1 .5v5z" /></div>
      </div>
    </div>
  );
}

// tab: label, width, and whether a separator closes it
type Tab = [string, string, boolean?];

function PanelTabs({ tabs, active, className = "h-[16px]" }: { tabs: Tab[]; active: number; className?: string }) {
  return (
    <div className={`flex shrink-0 items-center bg-[#bdbdbd] text-[#555] ${className}`}>
      <Grip className="mr-[5px] ml-[4px]" />
      {tabs.map(([t, w, sep], i) => (
        <div
          key={t}
          className={`flex h-full shrink-0 items-center ${w} ${i === active ? "justify-center bg-[#efefef] text-[#222]" : "justify-between"}`}
        >
          {t}
          {sep && <Sep className="mr-[2px] h-[7px]" />}
        </div>
      ))}
    </div>
  );
}

const Field = ({ text, className = "" }: { text: string; className?: string }) => (
  <div className={`flex h-[14px] shrink-0 items-center rounded-[2px] border border-[#bdbdbd] bg-white pt-px pl-[3px] ${className}`}>{text}</div>
);

const capIcon = (key: string, shape: string) => (
  <Ic key={key} s={11}><path d={shape} stroke="#666" strokeWidth="1.300" /><path d="M2 8h6" stroke="#2c7cae" strokeWidth="1.500" /><circle cx="8.500" cy="8" r="2.200" fill="#2c7cae" /></Ic>
);
const joinIcon = (key: string, shape: string) => (
  <Ic key={key} s={11}><path d={shape} stroke="#666" strokeWidth="1.300" /><path d="M8 2v6h6" stroke="#2c8fcc" strokeWidth="1.500" /><circle cx="8" cy="8.500" r="2.200" fill="#2c7cae" /></Ic>
);
const alignStroke = (key: string, a: string, b: string) => (
  <Ic key={key} s={11}><path d={a} stroke="#666" strokeWidth="1.500" /><path d={b} stroke="#2c8fcc" strokeWidth="1.700" /></Ic>
);

function StrokePanel() {
  const label = "w-[35px] shrink-0";
  return (
    <div className="flex h-[216px] shrink-0 flex-col">
      <div className="flex h-[24px] shrink-0 items-center bg-[#efefef] pl-[9px]">
        <div className={label}>Style:</div>
        <ButtonRow
          className="h-[13px] w-[62px]"
          on={[0]}
          icons={[
            <Ic key="a" s={11}><circle cx="8" cy="8" r="6.500" stroke="#777" strokeWidth="1.500" /><path d="M3.500 12.500l9-9" stroke="#e8403a" strokeWidth="1.800" /></Ic>,
            <Ic key="b" s={10}><path d="M2 14L14 2" stroke="#333" strokeWidth="1.900" /></Ic>,
            <Ic key="c" s={10}><path d="M2 14L14 2" stroke="#444" strokeWidth="1.700" strokeDasharray="4 2.500" /></Ic>,
            <Ic key="d" s={10}><path d="M1.500 14.500c1-6 3-4.500 5.500-7L13 2l1.500 1.500L10 9c-2.500 3-4.500 2-8.500 5.500z" fill="#333" stroke="#333" strokeWidth="1.200" /></Ic>,
          ]}
        />
      </div>
      <div className="flex h-[19px] shrink-0 items-center pl-[9px]">
        <div className={label}>Largeur:</div>
        <div className="size-[8px] shrink-0 rounded-full border border-[#666] bg-white" />
        <div className="h-[2px] w-[75px] bg-[#a6a6a6]" />
        <Field text="0 pt" className="ml-[3px] w-[43px]" />
      </div>
      <div className="flex h-[16px] shrink-0 items-center pl-[9px]">
        <div className={label}>Extrémité:</div>
        <ButtonRow
          className="h-[13px] w-[47px]"
          on={[1]}
          icons={[capIcon("round", "M2 3.500h7a4.500 4.500 0 010 9H2"), capIcon("butt", "M2 3.500h9v9H2"), capIcon("square", "M2 2.500h12v11H2")]}
        />
      </div>
      <div className="flex h-[16px] shrink-0 items-center pl-[9px]">
        <div className={label}>Angle:</div>
        <ButtonRow
          className="h-[13px] w-[47px]"
          on={[0]}
          icons={[joinIcon("round", "M3 1v9c0 3 1 4 4 4h7"), joinIcon("bevel", "M3 1v8l5 5h6"), joinIcon("miter", "M3 1v13h11")]}
        />
        <div className="ml-[17px] w-[22px]">Carré:</div>
        <Field text="2" className="w-[43px]" />
      </div>
      <div className="flex h-[17px] shrink-0 items-center pl-[9px]">
        <div className={label}>Aligner:</div>
        <ButtonRow
          className="h-[13px] w-[47px]"
          on={[0]}
          icons={[
            alignStroke("center", "M2 15V8c0-4 2-6 6-6h6M8 15v-4c0-2 1-3 3-3h4", "M5 15V9c0-3 1-4 4-4h6"),
            alignStroke("inside", "M9 15v-3c0-2 1-3 4-3", "M3 9V3h7"),
            alignStroke("outside", "M4 15V9c0-4 2-6 6-6h4", "M8.500 9h4M10.500 7v4"),
          ]}
        />
      </div>
      <div className="mx-[3px] mt-[7px] h-px shrink-0 bg-[#a0a0a0]" />
      <div className="flex h-[32px] shrink-0 items-center pl-[9px]">
        <div className={label}>Ordre:</div>
        <ButtonRow
          className="h-[13px] w-[31px]"
          on={[1]}
          icons={[
            <Ic key="a" s={10}><path d="M2 2h8v8H2z" stroke="#5ea7e4" strokeWidth="1.800" /><path d="M6 6h9v9H6z" fill="#8a8f94" /></Ic>,
            <Ic key="b" s={10}><path d="M6 6h9v9H6z" fill="#aab" /><path d="M2 2h9v9H2z" stroke="#3f8fd8" strokeWidth="2.200" /></Ic>,
          ]}
        />
        <Check className="mr-[2px] ml-[32px]" />
        Échelle de l'objet
      </div>
      <div className="mx-[3px] h-px shrink-0 bg-[#a0a0a0]" />
      <div className="flex h-[52px] shrink-0 items-center pt-[3px] pl-[9px] text-[#222]">
        <div className="flex flex-col gap-[4px]">
          {["Début:", "Fin:"].map((t) => (
            <div key={t} className="flex items-center">
              <div className={`${label} text-[#aaa]`}>{t}</div>
              <Combo dim className="w-[29px]" text={<div className="ml-[3px] h-px w-[12px] shrink-0 bg-[#222]" />} />
              <Combo dim className="ml-[4px] w-[43px]" text="100 %" />
            </div>
          ))}
        </div>
        <Chain className="ml-[2px] text-[#b5b5b5]" />
        <div className="ml-[15px] flex flex-col items-end gap-[6px]">
          <div className="flex h-[13px] w-[31px] rounded-[2px] border border-[#c8c8c8] bg-white"><div className="w-1/2 bg-[#d0d0d0]" /></div>
          <div className="h-[12px] w-[12px] rounded-[2px] border border-[#d0d0d0] bg-[#efefef]" />
        </div>
      </div>
      <div className="mx-[3px] h-px shrink-0 bg-[#a0a0a0]" />
      <div className="flex h-[30px] shrink-0 items-center pl-[9px]">
        <div className="flex h-[14px] w-[54px] items-center justify-center rounded-[2px] border border-[#b8b8b8] bg-white tracking-[0.4px]">Propriétés...</div>
        <div className="ml-[4px] w-[32px]">Pression:</div>
        <div className="h-[14px] w-[54px] rounded-[2px] border border-[#bbb] bg-[#afd4fd] ring-1 ring-white ring-inset" />
      </div>
    </div>
  );
}

const Chain = ({ className = "" }: { className?: string }) => (
  <svg width="5" height="11" viewBox="0 0 5 11" fill="none" className={`shrink-0 ${className}`}>
    <rect x="1" y=".5" width="3" height="4" rx="1.500" stroke="currentColor" />
    <rect x="1" y="6.500" width="3" height="4" rx="1.500" stroke="currentColor" />
    <path d="M2.500 3v5" stroke="currentColor" />
  </svg>
);

const effects = [
  "Flou gaussien",
  "Ombre externe",
  "Ombre interne",
  "Lueur externe",
  "Lueur interne",
  "Contour",
  "3D",
  "Biseau/Estampage",
  "Superposition de couleur",
  "Superposition de dégradés",
];

function SidePanels() {
  const axis = "w-[9px] pr-[2px] text-right";
  return (
    <div className="flex w-[180px] shrink-0 flex-col bg-[#e6e6e6] text-[9px] tracking-[0.17px]">
      <PanelTabs active={2} className="h-[17px]" tabs={[["Couleur", "w-[35px] pl-[3px]", true], ["Échantillons", "w-[42px]"], ["Trait", "w-[21px]"], ["Pinceaux", "w-[40px] pl-[3px]"]]} />
      <StrokePanel />
      <PanelTabs active={0} tabs={[["Effets", "w-[25px]"], ["Styles", "w-[28px] pl-[3px]", true], ["Styles de texte", "w-[54px]", true], ["Stock", "w-[30px]"]]} />
      <div className="flex h-[23px] shrink-0 items-center bg-[#efefef] pl-[5px]">
        <div className="w-[81px]">Opacité du remplissage:</div>
        <Combo text="100 %" className="w-[50px]" />
      </div>
      <div className="mr-[2px] ml-[1px] flex shrink-0 flex-col bg-[#d1d1d1]">
        {effects.map((e) => (
          <div key={e} className="flex h-[24.400px] items-center border-t border-[#b5b5b5] pl-[6px]">
            <svg width="4" height="6" viewBox="0 0 4 6"><path d="M0 0l4 3-4 3z" fill="#666" /></svg>
            <Check className="mr-[2px] ml-[5px] border-[#c4c4c4]" />
            {e}
          </div>
        ))}
      </div>
      <PanelTabs active={0} className="mt-[13px] h-[16px]" tabs={[["Transformer", "w-[46px]"], ["Historique", "w-[43px] pl-[3px]", true], ["Navigateur", "w-[40px]"]]} />
      <div className="flex grow items-start bg-[#efefef] pt-[9px]">
        <svg width="26" height="26" viewBox="0 0 26 26" className="mt-[6px] ml-[14px]">
          <path d="M3.500 3.500h20v20h-20z" fill="none" stroke="#7ab4ee" />
          <path d="M11.500 1.500h4v4h-4zM21.500 1.500h4v4h-4zM1.500 11.500h4v4h-4zM11.500 11.500h4v4h-4zM21.500 11.500h4v4h-4zM1.500 21.500h4v4h-4zM11.500 21.500h4v4h-4zM21.500 21.500h4v4h-4z" fill="#3f98f2" />
          <path d="M.5.500h6v6h-6z" fill="#1550f0" />
        </svg>
        <div className="ml-[12px] flex flex-col gap-[3px]">
          {[["X:", "128,4 mm", "L:", "128,4 mm"], ["Y:", "0 mm", "H:", "124,3 mm"]].map(([a, b, c, d]) => (
            <div key={a} className="flex items-center">
              <div className={axis}>{a}</div>
              <Field text={b} className="w-[43px]" />
              <div className={`ml-[8px] ${axis}`}>{c}</div>
              <Field text={d} className="w-[43px]" />
            </div>
          ))}
          <div className="mt-[3px] flex items-center">
            <div className={axis}>R:</div>
            <Combo text="0 °" className="w-[43px]" />
            <div className={`ml-[8px] ${axis}`}>S:</div>
            <Combo text="0 °" className="w-[43px]" />
          </div>
        </div>
        <Chain className="mt-[10px] ml-[4px] text-[#888]" />
      </div>
    </div>
  );
}

export default function App() {
  return (
    <div className="flex h-[720px] w-[1280px] flex-col overflow-hidden bg-white font-['Open_Sans','Noto_Sans',sans-serif] whitespace-nowrap text-[#222] [font-stretch:75%]">
      <MenuBar />
      <Toolbar />
      <ContextBar />
      <div className="flex h-[617px] shrink-0">
        <ToolColumn />
        <Workspace />
        <SidePanels />
      </div>
      <div className="flex h-[18px] shrink-0 items-center bg-[#e6e6e6] pt-[3px] pl-[11px] text-[9.200px] tracking-[0.32px]">
        <p>
          "Plan de travail1" sélectionné(s). <b>Glisser</b> pour déplacer la sélection. <b>Cliquer</b> sur un autre objet pour le sélectionner. <b>Cliquer</b> sur une zone vide pour désélectionner la sélection. <b>Maj</b> pour contraindre. <b>Ctrl</b> pour cloner les objets sélectionnés. <b>Alt</b> pour ignorer le magnétisme.
        </p>
      </div>
    </div>
  );
}
